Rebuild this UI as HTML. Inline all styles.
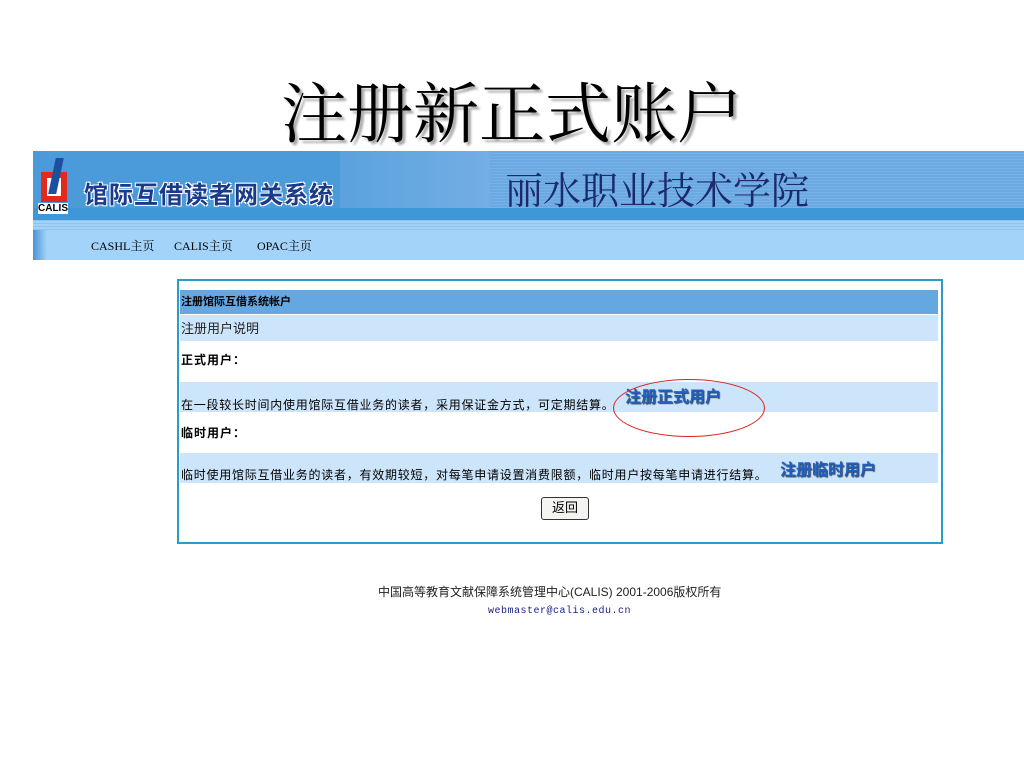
<!DOCTYPE html>
<html><head><meta charset="utf-8"><style>
body{margin:0;width:1024px;height:768px;background:#fff;position:relative;overflow:hidden;font-family:"Liberation Sans","Noto Sans CJK SC",sans-serif;}
.a{position:absolute;white-space:nowrap;}
.title{left:0;width:1024px;text-align:center;top:78px;font-family:"Liberation Serif","Noto Serif CJK SC",serif;font-size:66px;line-height:76px;color:#000;text-shadow:3px 3px 2px #aaa;}
.sm{font-size:12px;color:#000;}
.row{position:absolute;left:180px;width:758px;}
</style></head><body>
<div class="a title">注册新正式账户</div>

<div class="a" style="left:33px;top:151px;width:991px;height:57px;background:repeating-linear-gradient(#6ba9e2 0 2px,#77b1e6 2px 3px);"></div>
<div class="a" style="left:33px;top:151px;width:310px;height:57px;background:#4b9bdb;"></div>
<div class="a" style="left:340px;top:151px;width:150px;height:57px;background:linear-gradient(90deg,#5aa2de,#74aee4);"></div>
<div class="a" style="left:33px;top:208px;width:991px;height:12px;background:#3e97d9;"></div>
<div class="a" style="left:33px;top:220px;width:991px;height:10px;background:repeating-linear-gradient(#8cc4ee 0 1px,#a3d2f6 1px 3px);"></div>
<div class="a" style="left:33px;top:230px;width:991px;height:30px;background:#a3d3f9;"></div>
<div class="a" style="left:33px;top:230px;width:14px;height:30px;background:linear-gradient(90deg,#4a94d2,#a3d3f9);"></div>
<div class="a" style="left:41px;top:172px;width:26px;height:30px;background:#e02a20;"></div>
<div class="a" style="left:47px;top:178px;width:14px;height:18px;background:#fff;"></div>
<div class="a" style="left:52px;top:158px;width:8px;height:36px;background:#1d4fa0;transform:skewX(-12deg);"></div>
<div class="a" style="left:38px;top:203px;font-size:10px;font-weight:bold;color:#000;background:#fff;line-height:11px;">CALIS</div>
<div class="a" style="left:84px;top:175px;font-size:24px;font-weight:bold;color:#1a3a8a;letter-spacing:1px;text-shadow:1px 1px 0 #fff,-1px -1px 0 #fff,1px -1px 0 #fff,-1px 1px 0 #fff;">馆际互借读者网关系统</div>
<div class="a" style="left:505px;top:160px;font-family:'Liberation Serif','Noto Serif CJK SC',serif;font-size:38px;color:#1c2a6a;">丽水职业技术学院</div>
<div class="a sm" style="left:91px;top:237px;font-family:'Liberation Serif','Noto Serif CJK SC',serif;">CASHL主页</div>
<div class="a sm" style="left:174px;top:237px;font-family:'Liberation Serif','Noto Serif CJK SC',serif;">CALIS主页</div>
<div class="a sm" style="left:257px;top:237px;font-family:'Liberation Serif','Noto Serif CJK SC',serif;">OPAC主页</div>

<div class="a" style="left:177px;top:279px;width:762px;height:261px;border:2px solid #2b9bc8;"></div>
<div class="row" style="top:290px;height:24px;background:#65a7e0;"></div>
<div class="a" style="left:181px;top:293px;font-size:11px;font-weight:bold;">注册馆际互借系统帐户</div>
<div class="row" style="top:315px;height:26px;background:#cde5fb;"></div>
<div class="a" style="left:181px;top:318px;font-size:13px;color:#222;">注册用户说明</div>
<div class="a" style="left:181px;top:351px;font-size:12px;font-weight:bold;letter-spacing:1px;">正式用户：</div>
<div class="row" style="top:382px;height:30px;background:#cde5fb;"></div>
<div class="a sm" style="left:181px;top:396px;letter-spacing:0.75px;">在一段较长时间内使用馆际互借业务的读者，采用保证金方式，可定期结算。</div>
<div class="a" style="left:625px;top:383px;font-size:16px;font-weight:bold;color:#2060c0;text-shadow:1px 1px 1px #345;">注册正式用户</div>
<div class="a" style="left:613px;top:379px;width:150px;height:56px;border:1px solid #d22;border-radius:50%;"></div>
<div class="a" style="left:181px;top:424px;font-size:12px;font-weight:bold;letter-spacing:1px;">临时用户：</div>
<div class="row" style="top:453px;height:30px;background:#cde5fb;"></div>
<div class="a sm" style="left:181px;top:466px;letter-spacing:0.75px;">临时使用馆际互借业务的读者，有效期较短，对每笔申请设置消费限额，临时用户按每笔申请进行结算。</div>
<div class="a" style="left:780px;top:456px;font-size:16px;font-weight:bold;color:#2060c0;text-shadow:1px 1px 1px #345;">注册临时用户</div>
<div class="a" style="left:541px;top:497px;width:46px;height:21px;border:1px solid #333;border-radius:3px;background:#f4f4f0;font-size:13px;text-align:center;line-height:20px;">返回</div>

<div class="a" style="left:378px;top:583px;font-size:12px;color:#222;">中国高等教育文献保障系统管理中心(CALIS) 2001-2006版权所有</div>
<div class="a" style="left:488px;top:606px;font-size:10px;color:#1a237e;font-family:'Liberation Mono',monospace;letter-spacing:0.5px;">webmaster@calis.edu.cn</div>
</body></html>
